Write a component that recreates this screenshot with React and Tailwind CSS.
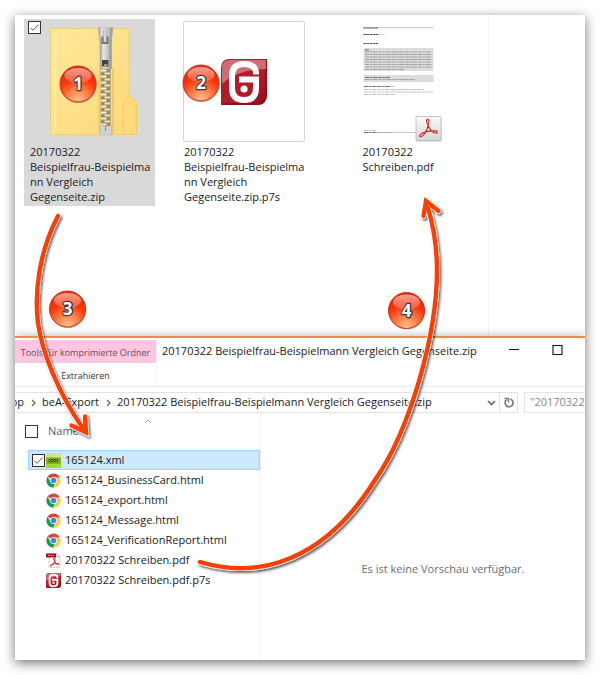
import React, { useState } from 'react';

const tiles = [
  {
    id: 'zip',
    lines: ['20170322', 'Beispielfrau-Beispielma', 'nn Vergleich', 'Gegenseite.zip'],
    selected: true,
  },
  {
    id: 'p7s',
    lines: ['20170322', 'Beispielfrau-Beispielma', 'nn Vergleich', 'Gegenseite.zip.p7s'],
  },
  { id: 'pdf', lines: ['20170322', 'Schreiben.pdf'] },
];

const files = [
  { name: '165124.xml', type: 'xml' },
  { name: '165124_BusinessCard.html', type: 'html' },
  { name: '165124_export.html', type: 'html' },
  { name: '165124_Message.html', type: 'html' },
  { name: '165124_VerificationReport.html', type: 'html' },
  { name: '20170322 Schreiben.pdf', type: 'pdf' },
  { name: '20170322 Schreiben.pdf.p7s', type: 'p7s' },
];

// Checkbox in the style of Windows Explorer
const CheckBox = ({ label, checked, onChange }) => (
  <label className="relative block h-[13px] w-[13px] shrink-0">
    <input
      type="checkbox"
      aria-label={label}
      checked={checked}
      onChange={onChange}
      className="block h-[13px] w-[13px] appearance-none border border-[#333] bg-white"
    />
    {checked && (
      <svg viewBox="0 0 13 13" className="pointer-events-none absolute inset-0 h-[13px] w-[13px]">
        <path d="M2.5 6.8 5 9.3 10.5 3.6" fill="none" stroke="#555" strokeWidth="1" />
      </svg>
    )}
  </label>
);

const ZipFolder = () => (
  <svg viewBox="0 0 131 125" className="h-[125px] w-full">
    <defs>
      <linearGradient id="folder" x1="0" y1="0" x2="1" y2="1">
        <stop offset="0" stopColor="#ffe79a" />
        <stop offset="1" stopColor="#fdd978" />
      </linearGradient>
      <linearGradient id="metal" x1="0" y1="0" x2="1" y2="0">
        <stop offset="0" stopColor="#a0a0a0" />
        <stop offset="0.3" stopColor="#e6e6e6" />
        <stop offset="0.7" stopColor="#c2c2c2" />
        <stop offset="1" stopColor="#8c8c8c" />
      </linearGradient>
      <pattern id="teeth" width="10" height="6" patternUnits="userSpaceOnUse" x="76.5" y="50">
        <rect width="10" height="6" fill="#a38a3f" />
        <path d="M0 0.5h6v2.2H0z" fill="#f0efea" />
        <path d="M0 2.7h6v0.8H0z" fill="#a9a89f" />
        <path d="M4 3.5h6v2.2H4z" fill="#e2e1dc" />
        <path d="M4 5.7h6v0.3H4z" fill="#959488" />
      </pattern>
    </defs>
    <path
      d="M26.500 9.500h77a2 2 0 0 1 2 2V77l6 5.500q1 1 1 2.500v29q0 1.500-1.500 1.500H26.500z"
      fill="url(#folder)"
      stroke="#eecb66"
      strokeWidth="0.8"
    />
    <path
      d="M99 115.500V84q0-1.500 1-2.500l5.500-5 6 6q1 1 1 2.500v29q0 1.500-1.500 1.500z"
      fill="#ffda78"
      stroke="#efc961"
      strokeWidth="0.8"
    />
    <path d="M31 13v97l-3 5" fill="none" stroke="#fff0b8" strokeWidth="1" />
    <path d="M74.500 50H76v66h-1.500zM88 50h2v66h-2z" fill="#efc969" />
    <rect x="76.500" y="50" width="10.500" height="58" fill="url(#teeth)" />
    <path d="M74 8.500h15l-1.500 14h-12z" fill="url(#metal)" stroke="#b5b5b5" strokeWidth="0.5" />
    <path d="M76 20h11.500v29q0 1-1 1H77q-1 0-1-1z" fill="url(#metal)" stroke="#a5a5a5" strokeWidth="0.6" />
    <path d="M77.500 17.500h7v7.500h-7z" fill="#757575" />
    <path d="M79.500 11h3v12h-3z" fill="#d9d9d9" stroke="#999" strokeWidth="0.5" />
    <path d="M78 41h6.500v6.500H78z" fill="#444" />
    <path d="M80 45h3.500v2H80z" fill="#a79b70" />
    <path d="M76 107h11.500v9H76z" fill="#d2d2d2" stroke="#aaa" strokeWidth="0.5" />
    <path d="M81.500 107v5" stroke="#777" strokeWidth="0.8" />
  </svg>
);

const SignerLogo = ({ className }) => (
  <svg viewBox="0 0 46 46" className={className}>
    <defs>
      <linearGradient id="signer" x1="0" y1="0" x2="1" y2="1">
        <stop offset="0" stopColor="#b01c2b" />
        <stop offset="0.6" stopColor="#b31c26" />
        <stop offset="1" stopColor="#8e0f18" />
      </linearGradient>
    </defs>
    <path d="M9 0h37v36q0 10-10 10H0V9q0-9 9-9z" fill="url(#signer)" />
    <path d="M1 45h35q9 0 9-9V1" fill="none" stroke="#8a0f18" strokeWidth="1.500" />
    <path d="M9 1h36v9Q17 10 1 25V9q0-8 8-8z" fill="#fff" fillOpacity="0.36" />
    <path
      d="M35 15.500v-1Q35 5 23 5 11 5 11 17v12q0 12 12 12t12-12v-8.500H18"
      fill="none"
      stroke="#fff"
      strokeWidth="6"
    />
    <circle cx="23" cy="30" r="3.600" fill="#fff" />
  </svg>
);

// Three-looped ribbon of the pdf icons
const Ribbon = ({ transform, stroke, strokeWidth }) => (
  <path
    d="M10.500 6.500C8.500 3 9 1 10.500 1s2 2 .5 6.500C9.500 13 6.500 18 4 19.500c-2 1-3-.5-1.500-2C5 15 11 13.500 18 13.500c3.500 0 4 2.500 1.500 2.500C15.500 16 12 11 10.500 6.500z"
    transform={transform}
    fill="none"
    stroke={stroke}
    strokeWidth={strokeWidth}
  />
);

const PdfThumbnail = () => (
  <svg viewBox="0 0 131 125" className="h-[125px] w-full">
    <defs>
      <linearGradient id="pdfBadge" x1="0" y1="0" x2="0" y2="1">
        <stop offset="0" stopColor="#fafafa" />
        <stop offset="1" stopColor="#d6d6d6" />
      </linearGradient>
    </defs>
    <path d="M31.500 8.500h70" stroke="#bbb" strokeWidth="0.8" />
    <path d="M31.500 9H46M31.500 15.500H47M31.500 24.500H46" stroke="#555" strokeWidth="1" strokeDasharray="3 .5 2 .4" />
    <path d="M48 15.500h5" stroke="#ccc" strokeWidth="0.800" />
    <path d="M31.500 29h70v23h-70zM31.500 56h70v7h-70z" fill="#dcdcdc" />
    <g fill="none" stroke="#a2a2a2" strokeWidth="1" strokeDasharray="4 .6 2.500 .5 5 .7">
      <path d="M33 31h4" stroke="#666" />
      <path d="M33 33h66M33 35.500h67M33 38h66M33 40.500h67M33 43h66M33 45.500h67M33 48h67M33 50.500h40" />
      <path d="M33 58.500h25" stroke="#777" />
      <path d="M33 60.500h50" />
      <path d="M32 67.500h26" stroke="#777" />
      <path d="M58 67.500h5M32 70.500h60M32 73h69M32 75.500h32" stroke="#c4c4c4" />
      <path d="M32 111.500h13" stroke="#c4c4c4" />
      <path d="M32 113.500h28" stroke="#777" />
    </g>
    <path d="M45 113.500h40" stroke="#bbb" strokeWidth="0.8" />
    <rect x="84" y="98.500" width="25.500" height="24" rx="1" fill="#888" fillOpacity="0.500" />
    <rect x="84" y="97.500" width="25" height="24" rx="1" fill="url(#pdfBadge)" stroke="#b9b9b9" strokeWidth="0.800" />
    <Ribbon transform="translate(86 99.500) scale(.92 .92)" stroke="#e02128" strokeWidth="1.200" />
  </svg>
);

const TileImage = ({ id }) => {
  if (id === 'zip') return <ZipFolder />;
  if (id === 'pdf') return <PdfThumbnail />;
  return (
    <div className="h-[125px] pt-[2px] pr-[4px] pl-[5px]">
      <div className="flex h-[121px] items-center justify-center rounded-xs border border-[#d4d4d4]">
        <SignerLogo className="h-[46px] w-[46px]" />
      </div>
    </div>
  );
};

const FileIcon = ({ type }) => {
  if (type === 'xml') {
    return (
      <svg viewBox="0 0 15 15" className="h-[15px] w-[15px]">
        <rect width="15" height="15" rx="1" fill="#84b814" />
        <path d="M0 1q0-1 1-1h13q1 0 1 1v3.500H0z" fill="#cfe39a" />
        <path d="M0 11h15v3q0 1-1 1H1q-1 0-1-1z" fill="#a9d431" />
        <path d="M4.300 5.500 2.500 7.500l1.800 2M10.700 5.500l1.800 2-1.800 2" fill="none" stroke="#2c4008" strokeWidth="1" />
        <circle cx="6" cy="7.500" r="1.300" fill="none" stroke="#2c4008" strokeWidth="0.900" />
        <circle cx="9" cy="7.500" r="1.300" fill="none" stroke="#2c4008" strokeWidth="0.900" />
      </svg>
    );
  }
  if (type === 'html') {
    return (
      <svg viewBox="0 0 48 48" className="h-[15px] w-[15px]">
        <path d="M24 24 5 11.500A23 23 0 0 1 44 13z" fill="#db4437" />
        <path d="M44.500 14H24l9 15.500L22.500 47A23 23 0 0 0 44.500 14z" fill="#ffcd40" />
        <path d="M5 11.500 15 29.500 24 34l4 1-5.500 12A23 23 0 0 1 5 11.500z" fill="#0f9d58" />
        <circle cx="24" cy="24" r="11" fill="#f1f1f1" />
        <circle cx="24" cy="24" r="8.500" fill="#4285f4" />
      </svg>
    );
  }
  if (type === 'pdf') {
    return (
      <svg viewBox="0 0 15 15" className="h-[15px] w-[15px]">
        <path d="M3 .5h8l3 3v11H3z" fill="#fff" stroke="#c4c4c4" strokeWidth="0.700" />
        <path d="M11 .5v3h3" fill="none" stroke="#999" strokeWidth="0.700" />
        <path d="M0 .5h10v4H0z" fill="#a8121d" />
        <path d="M2 2.500h1.500M4.500 2.500H6M7 2.500h1" stroke="#e5b3b6" strokeWidth="1" />
        <Ribbon transform="translate(3.500 4.500) scale(.46 .44)" stroke="#b3121d" strokeWidth="2" />
      </svg>
    );
  }
  return <SignerLogo className="h-[15px] w-[15px]" />;
};

const Chevron = () => (
  <svg viewBox="0 0 5 8" className="h-[8px] w-[5px] shrink-0">
    <path d="M1 1l3 3-3 3" fill="none" stroke="#666" strokeWidth="1.300" />
  </svg>
);

// Numbered red ball
const Ball = ({ x, y, number }) => (
  <g transform={`translate(${x} ${y})`}>
    <circle cx="0.500" cy="0.800" r="18.300" fill="#666" fillOpacity="0.500" />
    <circle r="18" fill="url(#ball)" stroke="#c9361f" strokeWidth="1" />
    <ellipse cx="0" cy="-8.500" rx="13.500" ry="7.500" fill="url(#gloss)" />
    <text
      y="6"
      textAnchor="middle"
      fill="#fff"
      stroke="#3a3a3a"
      strokeWidth="2.400"
      strokeLinejoin="round"
      paintOrder="stroke"
      className="font-['Open_Sans',sans-serif] text-[17px] font-bold"
    >
      {number}
    </text>
  </g>
);

const Annotations = () => (
  <svg width="600" height="675" viewBox="0 0 600 675" className="pointer-events-none absolute top-0 left-0">
    <defs>
      <radialGradient id="ball" cx="0.5" cy="0.95" r="0.95">
        <stop offset="0" stopColor="#ffc08a" />
        <stop offset="0.350" stopColor="#ff7a45" />
        <stop offset="0.650" stopColor="#fb3208" />
        <stop offset="1" stopColor="#e32a08" />
      </radialGradient>
      <linearGradient id="gloss" x1="0" y1="0" x2="0" y2="1">
        <stop offset="0" stopColor="#fff" stopOpacity="0.550" />
        <stop offset="1" stopColor="#fff" stopOpacity="0.180" />
      </linearGradient>
      <filter id="arrowShadow" x="-20%" y="-20%" width="140%" height="140%">
        <feDropShadow dx="1.500" dy="2" stdDeviation="1.300" floodColor="#000" floodOpacity="0.600" />
      </filter>
      <g id="arrows" fill="none" strokeLinecap="round">
        <path d="M58 216C40 250 34 290 38 323 42 352 58 392 82 427" />
        <path d="M71.500 425.500l14.500 7-1-16" />
        <path d="M200 562C260 580 325 560 375 480 410 430 437 335 437 270 437 245 433 225 428 208" />
        <path d="M423.500 216l2.500-15 12.500 10" />
      </g>
    </defs>
    <g filter="url(#arrowShadow)">
      <use href="#arrows" stroke="#fff" strokeWidth="5.800" />
      <use href="#arrows" stroke="#ff3d00" strokeWidth="4.400" />
    </g>
    <Ball x={78} y={84} number="1" />
    <Ball x={201} y={83} number="2" />
    <Ball x={67.5} y={309} number="3" />
    <Ball x={406.5} y={310.5} number="4" />
  </svg>
);

const App = () => {
  const [tileChecked, setTileChecked] = useState(true);
  const [allChecked, setAllChecked] = useState(false);
  const [fileChecked, setFileChecked] = useState(true);

  return (
    <div className="relative flex min-h-screen flex-col bg-white p-[15px] font-['Open_Sans','Noto_Sans',sans-serif] text-[11px] text-[#1a1a1a]">
      <main className="flex flex-1 flex-col overflow-hidden bg-white shadow-[0_3px_11px_rgba(0,0,0,0.55)]">
        {/* Files in large icon view */}
        <section className="flex h-[321px] shrink-0">
          <ul className="flex w-[474px] shrink-0 items-start gap-[23px] border-r border-[#f3f3f3] px-[9px] pt-[4px]">
            {tiles.map((tile) => (
              <li
                key={tile.id}
                className={`relative w-[131px] shrink-0 pb-[2px] ${tile.selected ? 'bg-[#d9d9d9]' : ''}`}
              >
                <TileImage id={tile.id} />
                {tile.selected && (
                  <div className="absolute top-[2px] left-[4px]">
                    <CheckBox
                      label="Gegenseite.zip"
                      checked={tileChecked}
                      onChange={() => setTileChecked(!tileChecked)}
                    />
                  </div>
                )}
                <p className={`leading-[15px] whitespace-nowrap ${tile.id === 'pdf' ? 'mx-auto w-[70px]' : 'pl-[6px]'}`}>
                  {tile.lines.map((line) => (
                    <span key={line} className="block">{line}</span>
                  ))}
                </p>
              </li>
            ))}
          </ul>
        </section>

        {/* Explorer window */}
        <section className="flex flex-1 flex-col border-t-2 border-[#f08c45] bg-white shadow-[0_0_9px_rgba(0,0,0,0.3)]">
          <header className="flex h-[49px] border-b border-[#ececec]">
            <div className="flex w-[142px] shrink-0 flex-col border-r border-[#f1f1f1] pt-[2px]">
              <div className="flex h-[23px] items-center justify-center bg-[#fdc6e0] pt-[2px] text-[9px] whitespace-nowrap text-[#6d4a5c]">
                Tools für komprimierte Ordner
              </div>
              <button type="button" className="h-[24px] pt-[2px] text-[9px] text-[#333]">
                Extrahieren
              </button>
            </div>
            <h1 className="h-[24px] flex-1 pl-[5px] leading-[25px] whitespace-nowrap">
              20170322 Beispielfrau-Beispielmann Vergleich Gegenseite.zip
            </h1>
            <div className="flex h-[24px] shrink-0 items-center gap-[32px] pr-[22px]">
              <button type="button" aria-label="Minimieren">
                <svg viewBox="0 0 11 11" className="h-[11px] w-[11px]">
                  <path d="M0 4.500h10" stroke="#111" strokeWidth="1" />
                </svg>
              </button>
              <button type="button" aria-label="Maximieren">
                <svg viewBox="0 0 11 11" className="h-[11px] w-[11px]">
                  <path d="M1 .5h9v9H1z" fill="none" stroke="#111" strokeWidth="1.100" />
                </svg>
              </button>
            </div>
          </header>

          {/* Address bar */}
          <div className="mt-[5px] flex h-[21px] gap-[6px]">
            <div className="flex min-w-0 flex-1 items-center overflow-hidden border-y border-r border-[#e3e3e3] whitespace-nowrap">
              <nav className="flex flex-1 items-center">
                <a href="#desktop" className="flex w-[9px] shrink-0 justify-end overflow-hidden">op</a>
                <span className="flex w-[18px] shrink-0 justify-center"><Chevron /></span>
                <a href="#export">beA-Export</a>
                <span className="flex w-[18px] shrink-0 justify-center"><Chevron /></span>
                <a href="#zip">20170322 Beispielfrau-Beispielmann Vergleich Gegenseite.zip</a>
              </nav>
              <button type="button" aria-label="Verlauf" className="flex w-[16px] shrink-0 justify-center">
                <svg viewBox="0 0 9 6" className="h-[6px] w-[9px]">
                  <path d="M1 1l3.500 3.500L8 1" fill="none" stroke="#666" strokeWidth="1.600" />
                </svg>
              </button>
              <button
                type="button"
                aria-label="Aktualisieren"
                className="flex h-full w-[18px] shrink-0 items-center justify-center border-l border-[#e3e3e3]"
              >
                <svg viewBox="0 0 10 11" className="h-[11px] w-[10px]">
                  <path d="M6.300 2a4 4 0 1 1-3.600.600" fill="none" stroke="#777" strokeWidth="1.600" />
                  <path d="M.5 1.500h4v4" fill="none" stroke="#777" strokeWidth="1.400" />
                </svg>
              </button>
            </div>
            <input
              type="text"
              aria-label="Suchen"
              placeholder={'"20170322'}
              className="w-[61px] shrink-0 border-y border-l border-[#e3e3e3] pl-[5px] outline-none placeholder:text-[#888]"
            />
          </div>

          <div className="flex flex-1">
            <div className="w-[246px] shrink-0 border-r border-[#f3f3f3]">
              <table className="w-full border-collapse">
                <thead>
                  <tr>
                    <th className="h-[37px] p-0 text-left font-normal">
                      <div className="relative flex items-center gap-[10px] pl-[10px]">
                        <CheckBox
                          label="Alle auswählen"
                          checked={allChecked}
                          onChange={() => setAllChecked(!allChecked)}
                        />
                        <button type="button" className="text-[#4c607a]">Name</button>
                        <svg viewBox="0 0 8 5" className="absolute -top-[4px] left-[129px] h-[5px] w-[8px]">
                          <path d="M1 4l3-3 3 3" fill="none" stroke="#999" strokeWidth="0.900" />
                        </svg>
                      </div>
                    </th>
                  </tr>
                </thead>
                <tbody>
                  {files.map((file, index) => (
                    <tr key={file.name}>
                      <td className="h-[20px] p-0 pl-[13px]">
                        <div
                          className={`flex h-[20px] items-center pl-[3px] whitespace-nowrap ${
                            index === 0 ? 'border border-[#99d1ff] bg-[#cce8ff]' : 'border border-transparent'
                          }`}
                        >
                          <span className="w-[14px] shrink-0">
                            {index === 0 && (
                              <CheckBox
                                label={file.name}
                                checked={fileChecked}
                                onChange={() => setFileChecked(!fileChecked)}
                              />
                            )}
                          </span>
                          <FileIcon type={file.type} />
                          <span className="pl-[4px]">{file.name}</span>
                        </div>
                      </td>
                    </tr>
                  ))}
                </tbody>
              </table>
            </div>
            {/* Preview pane */}
            <div className="flex flex-1 items-center justify-center pt-[65px] pl-[40px] text-[#6d6d6d]">
              Es ist keine Vorschau verfügbar.
            </div>
          </div>
        </section>
      </main>
      <Annotations />
    </div>
  );
};

export default App;
